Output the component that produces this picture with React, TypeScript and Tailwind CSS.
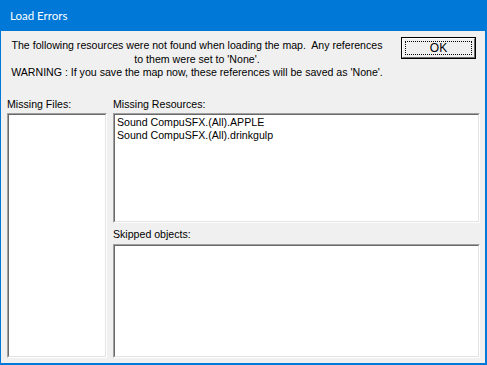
import React from "react";

function Sunken({ className, children }: { className: string; children?: React.ReactNode }) {
  return (
    <div className={`border-t border-l border-t-[#a0a0a0] border-l-[#a0a0a0] border-r border-b border-r-white border-b-white ${className}`}>
      <div className="h-full w-full border-t border-l border-t-[#696969] border-l-[#696969] border-r border-b border-r-[#e3e3e3] border-b-[#e3e3e3] bg-white px-[2px] pt-[1px]">
        {children}
      </div>
    </div>
  );
}

export default function App() {
  return (
    <div
      className="w-[487px] h-[365px] bg-[#0078d7] flex flex-col pl-[1px] pr-[2px] pb-[2px] text-black"
      style={{ fontFamily: '"Liberation Sans", Arial, sans-serif' }}
    >
      <div
        className="h-[31px] shrink-0 flex items-center pl-[9px] text-white text-[11.5px]"
        style={{ fontFamily: 'Lato, "Noto Sans", sans-serif' }}
      >
        Load Errors
      </div>
      <div className="flex-1 bg-[#f0f0f0] flex flex-col text-[10.6px] leading-[13px] whitespace-nowrap">
        <div className="flex h-[66px]">
          <div className="ml-[7px] w-[378px] pt-[8px] text-center leading-[13.5px]">
            The following resources were not found when loading the map.&nbsp; Any references
            <br />
            to them were set to 'None'.
            <br />
            WARNING : If you save the map now, these references will be saved as 'None'.
          </div>
          <div className="ml-[15px] mt-[6px] w-[75px] h-[22px] border border-[#000000] bg-[#f0f0f0]">
            <div className="h-full w-full border-t border-l border-t-white border-l-white border-r border-b border-r-[#696969] border-b-[#696969] p-[2px]">
              <div className="h-full w-full border border-dotted border-black flex items-center justify-center text-[12px]">
                OK
              </div>
            </div>
          </div>
        </div>
        <div className="flex-1 flex pl-[6px] pr-[5px] pb-[5px]">
          <div className="w-[100px] flex flex-col">
            <div className="h-[16px] shrink-0 pt-[1px]">Missing Files:</div>
            <Sunken className="flex-1" />
          </div>
          <div className="ml-[6px] flex-1 flex flex-col">
            <div className="h-[16px] shrink-0 pt-[1px]">Missing Resources:</div>
            <Sunken className="h-[110px] shrink-0">
              <div>Sound CompuSFX.(All).APPLE</div>
              <div>Sound CompuSFX.(All).drinkgulp</div>
            </Sunken>
            <div className="h-[21px] shrink-0 pt-[5px]">Skipped objects:</div>
            <Sunken className="flex-1" />
          </div>
        </div>
      </div>
    </div>
  );
}
